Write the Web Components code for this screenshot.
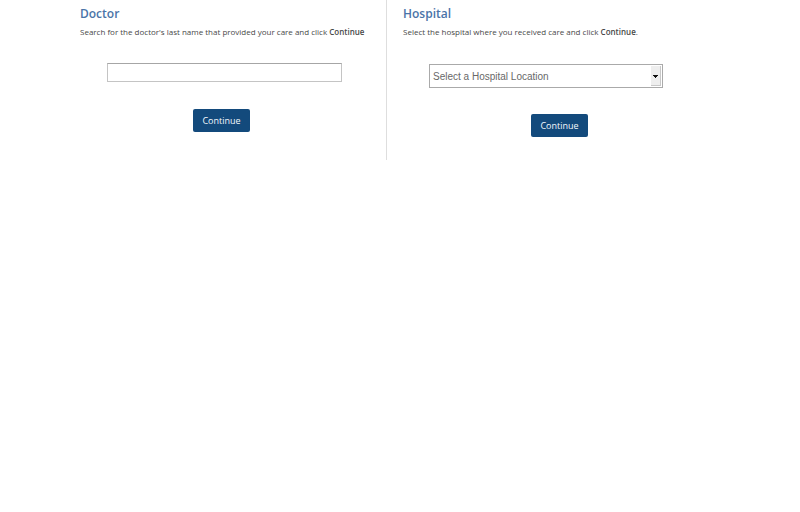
<!DOCTYPE html>
<html lang="en">
<head>
<meta charset="utf-8">
<title>Find care</title>
<style>
body { margin: 0; background: #fff; color: #484848; font-family: "Open Sans", "Noto Sans", sans-serif; }
b { font-weight: 600; }
</style>
</head>
<body>
<search-page>
  <search-panel heading="Doctor">
    <span slot="intro">Search for the doctor's last name that provided your care and click <b>Continue</b></span>
    <name-field></name-field>
  </search-panel>
  <search-panel heading="Hospital">
    <span slot="intro">Select the hospital where you received care and click <b>Continue</b>.</span>
    <hospital-select></hospital-select>
  </search-panel>
</search-page>
<script>
class SearchPage extends HTMLElement {
  constructor() {
    super();
    this.attachShadow({ mode: "open" }).innerHTML = `
      <style>
        :host { display: block; padding: 0 84px 0 80px; }
        main { display: grid; grid-template-columns: minmax(0, 307fr) minmax(0, 329fr); }
        ::slotted(:first-child) { border-right: 1px solid #dedede; padding-right: 23px; }
        ::slotted(:last-child) { padding-left: 16px; }
      </style>
      <main><slot></slot></main>`;
  }
}
class SearchPanel extends HTMLElement {
  constructor() {
    super();
    this.attachShadow({ mode: "open" }).innerHTML = `
      <style>
        :host { display: block; }
        h2 { margin: 0; padding-top: 6px; font-size: 12px; line-height: 16px; font-weight: 600; color: #4a74a8; }
        p { margin: 4px 0 0; font-size: 8px; line-height: 12px; white-space: nowrap; }
        ::slotted(name-field) { margin: 25px 0 27px 27px; }
        ::slotted(hospital-select) { margin: 26px 0 26px 26px; }
        form { display: flex; flex-direction: column; align-items: flex-start; padding-bottom: 23px; }
        button { align-self: center; height: 23px; min-width: 57px; padding: 0 8px; border: 0; border-radius: 2px;
          background: #134a7c; color: #f4f8fc; font-family: inherit; font-size: 9px; line-height: 12px; }
      </style>
      <h2></h2>
      <p><slot name="intro"></slot></p>
      <form><slot></slot><button type="button">Continue</button></form>`;
    this.shadowRoot.querySelector("h2").textContent = this.getAttribute("heading");
  }
}
class NameField extends HTMLElement {
  constructor() {
    super();
    this.attachShadow({ mode: "open" }).innerHTML = `
      <style>
        :host { display: block; width: 235px; }
        input { display: block; box-sizing: border-box; width: 100%; height: 19px; margin: 0; padding: 0 3px; background: #fff;
          border: 1px solid #c4c4c4; border-top-color: #a6a6a6; font: 9px "Liberation Sans", sans-serif; }
      </style>
      <input type="text" aria-label="Doctor's last name">`;
  }
}
class HospitalSelect extends HTMLElement {
  constructor() {
    super();
    this.attachShadow({ mode: "open" }).innerHTML = `
      <style>
        :host { display: grid; width: 234px; }
        select { grid-area: 1 / 1; appearance: none; box-sizing: border-box; width: 100%; height: 24px; margin: 0;
          padding: 0 14px 0 3px; border: 1px solid #aaa; border-radius: 0; background: #fff; color: #686868;
          font: 10px "Liberation Sans", sans-serif; }
        svg { grid-area: 1 / 1; justify-self: end; align-self: center; margin-right: 1px; pointer-events: none; }
      </style>
      <select aria-label="Hospital location"><option>Select a Hospital Location</option></select>
      <svg width="11" height="22" viewBox="0 0 11 22" aria-hidden="true">
        <path fill="#eee" d="M0 1h10v20H0z"/>
        <path fill="#c8c8c8" d="M9 1h1v20H0v-1h9z"/>
        <path fill="#111" d="M2 10h5v1H6v1H5v1H4v-1H3v-1H2z"/>
      </svg>`;
  }
}
customElements.define("search-page", SearchPage);
customElements.define("search-panel", SearchPanel);
customElements.define("name-field", NameField);
customElements.define("hospital-select", HospitalSelect);
</script>
</body>
</html>
